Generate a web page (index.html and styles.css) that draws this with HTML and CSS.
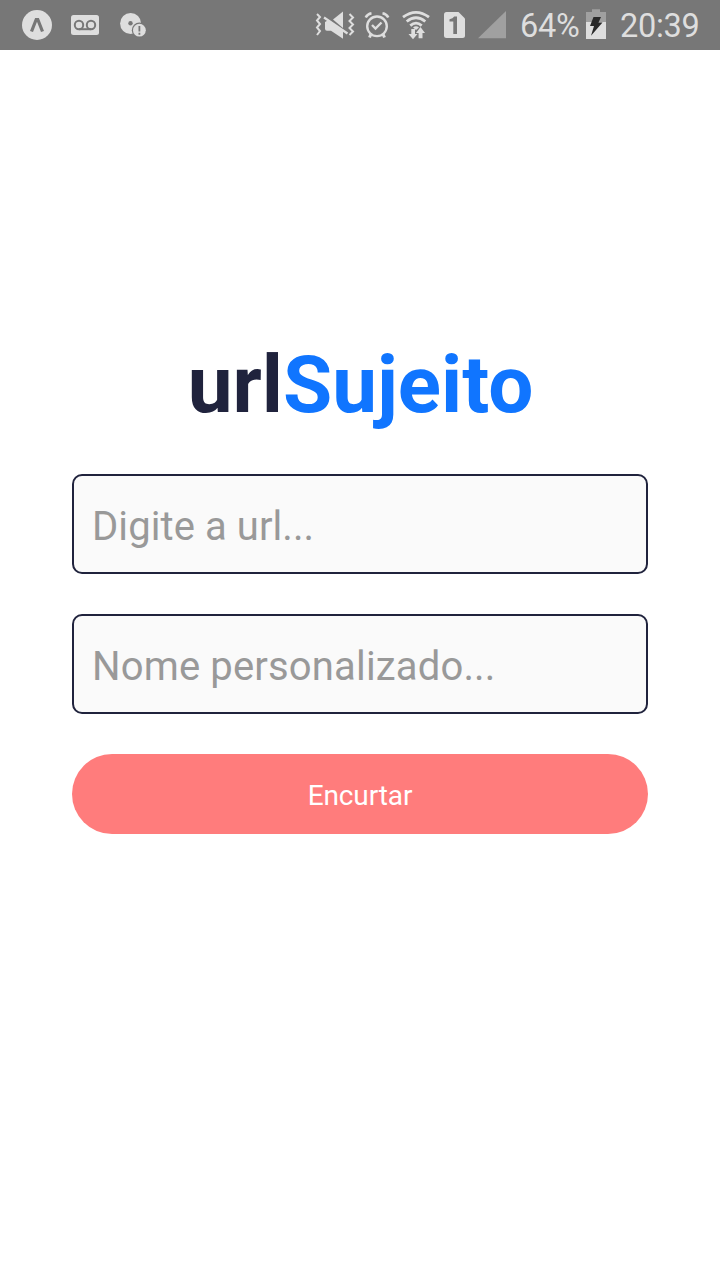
FILE: index.html
```
<!DOCTYPE html>
<html lang="pt-BR">
<head>
<meta charset="utf-8">
<title>urlSujeito</title>
<link rel="stylesheet" href="styles.css">
</head>
<body>
<header class="status">
  <div class="status-group notifications">
    <svg width="30" height="50" viewBox="22 0 30 50"><circle cx="37" cy="25" r="15" fill="#dedede"/><path d="M31.500 31.500L36.200 19.500H37.800L42.500 31.500" fill="none" stroke="#777" stroke-width="3.200"/></svg>
    <svg width="28" height="50" viewBox="71 0 28 50" class="voicemail"><rect x="71" y="15" width="28" height="20" rx="2.500" fill="#dedede"/><g fill="none" stroke="#777" stroke-width="2"><circle cx="79" cy="25" r="4.200"/><circle cx="91" cy="25" r="4.200"/><path d="M79 29.200H91"/></g></svg>
    <svg width="27" height="50" viewBox="120 0 27 50" class="disc"><circle cx="130.600" cy="23.500" r="10.500" fill="#dedede"/><circle cx="130.500" cy="23.300" r="2.200" fill="#777"/><circle cx="139.400" cy="30.200" r="7.600" fill="#777"/><circle cx="139.400" cy="30.200" r="6.400" fill="#dedede"/><path d="M139.400 26V31.400M139.400 32.700V34.700" stroke="#777" stroke-width="1.800"/></svg>
  </div>
  <div class="status-group system">
    <svg width="40" height="50" viewBox="315 0 40 50"><g fill="none" stroke="#dedede" stroke-width="2"><path d="M317 14L320 17L317 20.500L320 24L317 27.500L320 31L317 35"/><path d="M349.500 14L353 17.500L349.500 21L353 24.500L349.500 28L353 31.500L349.500 35"/></g><path d="M333 19.500L343 11.500V28Z" fill="#dedede"/><path d="M325 22L328.500 20L343 31V38.800L331 30.800H327Q325 30.800 325 28.800Z" fill="#dedede"/><path d="M324 17.500L347.500 33.500" stroke="#dedede" stroke-width="2.200"/></svg>
    <svg width="26" height="50" viewBox="364 0 26 50" class="alarm"><g fill="none" stroke="#dedede" stroke-width="2.400"><circle cx="377" cy="26.300" r="9.800"/><path d="M372 25L375.500 28.500L381.500 22.500"/><path d="M365.700 17.500Q367.500 14 371.500 13.300M388.300 17.500Q386.500 14 382.500 13.300" stroke-width="2.600"/><path d="M371 34L369.500 37.500M383 34L384.500 37.500" stroke-width="3"/></g></svg>
    <svg width="28" height="50" viewBox="402 0 28 50" class="wifi"><g fill="none" stroke="#dedede" stroke-width="2.800"><path d="M403 17.200Q416 7.500 429 17.200"/><path d="M406.700 21.500Q416 14 425.300 21.500"/><path d="M410.300 25.600Q416 20.700 421.700 25.600"/></g><path d="M413 27.500Q416 25 419 27.500L416 30Z" fill="#dedede"/><path d="M411.300 29H415V34H417.500L413 39.300L408.500 34H411.300ZM418.600 38.300V33H416L420.500 27L425 33H422.500V38.300Z" fill="#dedede"/></svg>
    <svg width="21" height="50" viewBox="444 0 21 50" class="sim"><path d="M446.500 12H458.500L465 18.500V35.500Q465 38 462.500 38H446.500Q444 38 444 35.500V14.500Q444 12 446.500 12Z" fill="#dedede"/><path d="M449.500 19.300Q453 18.800 454.200 16.500H457V34H453.300V21.500H449.500Z" fill="#777"/></svg>
    <svg width="28" height="50" viewBox="478 0 28 50" class="signal"><path d="M478 38.300H506V11Z" fill="#a0a0a0"/></svg>
    <span class="percent">64%</span>
    <svg width="20" height="50" viewBox="586 0 20 50"><path d="M592 9.300H600V12H606V22H586V12H592Z" fill="#a0a0a0"/><path d="M586 22H606V39H586Z" fill="#dedede"/><path d="M593.500 17H601L598.500 22.500H602.500L591 35.800L594 26H590Z" fill="#292929"/></svg>
    <time class="clock">20:39</time>
  </div>
</header>
<main class="content">
  <h1 class="title">url<span class="accent">Sujeito</span></h1>
  <form class="form">
    <input class="field field-url" type="text" placeholder="Digite a url...">
    <input class="field field-name" type="text" placeholder="Nome personalizado...">
    <button class="submit" type="button">Encurtar</button>
  </form>
</main>
</body>
</html>
```
FILE: styles.css
```
* { box-sizing: border-box; }
body {
  margin: 0;
  min-height: 1280px;
  background: #fff;
  font-family: Roboto, sans-serif;
}
.status {
  display: flex;
  justify-content: space-between;
  height: 50px;
  padding: 0 20px 0 22px;
  background: #777;
  color: #dedede;
  overflow: hidden;
}
.status-group { display: flex; align-items: center; }
.status svg { display: block; flex: none; }
.voicemail { margin-left: 19px; }
.disc { margin-left: 21px; }
.alarm { margin-left: 9px; }
.wifi { margin-left: 12px; }
.sim { margin-left: 14px; }
.signal { margin-left: 13px; }
.percent, .clock {
  font-size: 32.5px;
  letter-spacing: -0.3px;
  line-height: 50px;
  padding-top: 2px;
  white-space: nowrap;
}
.percent { width: 66px; margin-left: 14px; }
.clock { width: 81px; margin-left: 13px; padding-left: 1px; }
.content {
  display: flex;
  flex-direction: column;
  align-items: center;
  padding: 288px 72px 0;
}
.title {
  margin: 0;
  padding-left: 1px;
  font-size: 80px;
  line-height: 94px;
  font-weight: 700;
  color: #20233d;
}
.accent { color: #1075ff; }
.form {
  display: flex;
  flex-direction: column;
  gap: 40px;
  width: 100%;
  margin-top: 42px;
}
.field {
  width: 100%;
  height: 100px;
  padding: 4px 18px 0;
  border: 2px solid #20233d;
  border-radius: 10px;
  background: #fafafa;
  font: 40px Roboto, sans-serif;
  color: #20233d;
}
.field-url { letter-spacing: 0.08px; }
.field-name { letter-spacing: 0.16px; }
.field::placeholder { color: #999; opacity: 1; }
.submit {
  width: 100%;
  height: 80px;
  padding: 2px 0 0;
  border: 0;
  border-radius: 40px;
  background: #ff7c7c;
  color: #fff;
  font: 28px Roboto, sans-serif;
  letter-spacing: -0.1px;
}
```
